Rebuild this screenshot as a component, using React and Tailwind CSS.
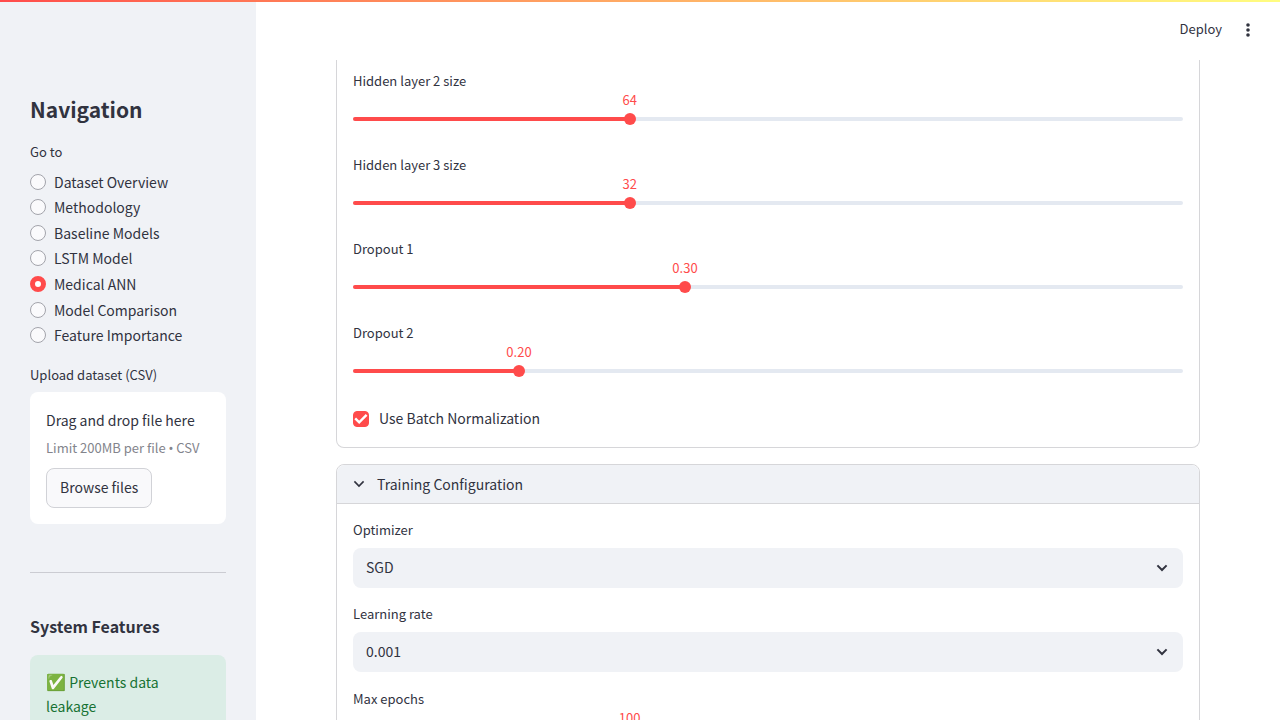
import { useState } from "react";

const PAGES = [
  "Dataset Overview",
  "Methodology",
  "Baseline Models",
  "LSTM Model",
  "Medical ANN",
  "Model Comparison",
  "Feature Importance",
];

function Slider({ id, label, min, max, step, initial, digits = 0 }) {
  const [value, setValue] = useState(initial);
  const percent = `${((value - min) / (max - min)) * 100}%`;
  return (
    <div className="pb-3">
      <label htmlFor={id} className="block h-7 text-[13px] leading-[22px]">
        {label}
      </label>
      <div className="relative pt-[15px]">
        <output
          htmlFor={id}
          className="absolute -top-[6px] -translate-x-1/2 text-[13px] leading-4 text-[#ff4b4b]"
          style={{ left: percent }}
        >
          {value.toFixed(digits)}
        </output>
        <div className="grid items-center">
          <div className="col-start-1 row-start-1 h-1 overflow-hidden rounded-full bg-[#e4e9f1]">
            <div className="h-full bg-[#ff4b4b]" style={{ width: percent }} />
          </div>
          <input
            id={id}
            type="range"
            min={min}
            max={max}
            step={step}
            value={value}
            onChange={(e) => setValue(Number(e.target.value))}
            className="col-start-1 row-start-1 -mx-1.5 h-3 cursor-pointer appearance-none bg-transparent [&::-webkit-slider-thumb]:size-3 [&::-webkit-slider-thumb]:appearance-none [&::-webkit-slider-thumb]:rounded-full [&::-webkit-slider-thumb]:bg-[#ff4b4b]"
          />
        </div>
      </div>
    </div>
  );
}

function Chevron({ className }) {
  return (
    <svg viewBox="0 0 12 8" className={className} fill="none" stroke="currentColor" aria-hidden="true">
      <path d="M1.4 1.4 6 6l4.6-4.6" />
    </svg>
  );
}

function Select({ id, label, options, initial }) {
  const [value, setValue] = useState(initial);
  return (
    <div>
      <label htmlFor={id} className="block h-7 text-[13px] leading-5">
        {label}
      </label>
      <div className="grid items-center">
        <select
          id={id}
          value={value}
          onChange={(e) => setValue(e.target.value)}
          className="col-start-1 row-start-1 h-10 w-full appearance-none rounded-lg bg-[#f0f2f6] px-[13px] pb-0.5 text-sm"
        >
          {options.map((o) => (
            <option key={o}>{o}</option>
          ))}
        </select>
        <Chevron className="pointer-events-none col-start-1 row-start-1 mr-[15px] h-2 w-3 justify-self-end stroke-2" />
      </div>
    </div>
  );
}

function Sidebar() {
  const [page, setPage] = useState("Medical ANN");
  return (
    <aside className="w-64 shrink-0 overflow-hidden bg-[#f0f2f6] px-[30px] pt-[95px]">
      <h2 className="text-[21px] leading-7 font-bold">Navigation</h2>
      <fieldset className="mt-[18px]">
        <legend className="h-7 text-[13px] leading-[22px]">Go to</legend>
        <div className="grid h-[179px] auto-rows-fr">
          {PAGES.map((name) => (
            <label key={name} className="flex items-center gap-2 text-sm leading-6">
              <input
                type="radio"
                name="page"
                checked={page === name}
                onChange={() => setPage(name)}
                className="size-4 appearance-none rounded-full border border-[#a3a4ab] bg-[#fafafc] checked:border-5 checked:border-[#ff4b4b] checked:bg-white"
              />
              {name}
            </label>
          ))}
        </div>
      </fieldset>

      <div className="mt-4">
        <h3 className="h-7 text-[13px] leading-[22px]">Upload dataset (CSV)</h3>
        <section className="rounded-lg bg-white p-4">
          <p className="text-sm leading-6">Drag and drop file here</p>
          <p className="mt-1 text-[13px] leading-6 text-[#83848c]">
            Limit 200MB per file <span className="font-['Noto_Sans',sans-serif]">•</span> CSV
          </p>
          <button
            type="button"
            className="mt-2 h-10 rounded-lg border border-[#d1d2d7] bg-[#f9f9fb] px-[13px] pb-0.5 text-sm leading-6"
          >
            Browse files
          </button>
        </section>
      </div>

      <hr className="mt-12 border-[#cbccd2]" />

      <h3 className="mt-[41px] text-base leading-6 font-bold">System Features</h3>
      <div className="mt-[17px] rounded-lg bg-[#dbede6] px-4 pt-3.5 pb-4 text-sm leading-6 text-[#177233]">
        <span className="text-base leading-6">✅</span> Prevents data leakage
      </div>
    </aside>
  );
}

export default function App() {
  const [batchNorm, setBatchNorm] = useState(true);
  const [open, setOpen] = useState(true);
  return (
    <div className="relative flex h-screen overflow-hidden bg-white font-['Noto_Sans_CJK_SC',sans-serif] text-[#31333f]">
      <div className="absolute inset-x-0 top-0 h-0.5 bg-linear-to-r from-[#ff4b4b] to-[#fffd80]" />
      <Sidebar />
      <div className="flex min-w-0 flex-1 flex-col">
        <header className="flex h-15 shrink-0 items-center justify-end gap-[18px] pr-6">
          <button type="button" className="pb-0.5 text-[13px] leading-6">
            Deploy
          </button>
          <button type="button" aria-label="Main menu">
            <svg viewBox="0 0 16 16" className="size-4" fill="currentColor" aria-hidden="true">
              <circle cx="8" cy="3" r="1.8" />
              <circle cx="8" cy="8" r="1.8" />
              <circle cx="8" cy="13" r="1.8" />
            </svg>
          </button>
        </header>

        <main className="flex min-h-0 flex-1 flex-col gap-4 overflow-hidden px-20">
          <section className="flex shrink-0 flex-col gap-4 rounded-b-lg border border-t-0 border-[#d6d6d9] px-4 pt-2.5 pb-[15px]">
            <div className="flex flex-col gap-[17px]">
              <Slider id="hidden2" label="Hidden layer 2 size" min={16} max={160} step={1} initial={64} />
              <Slider id="hidden3" label="Hidden layer 3 size" min={8} max={80} step={1} initial={32} />
              <Slider id="dropout1" label="Dropout 1" min={0.1} max={0.6} step={0.05} initial={0.3} digits={2} />
              <Slider id="dropout2" label="Dropout 2" min={0.1} max={0.6} step={0.05} initial={0.2} digits={2} />
            </div>
            <label className="mt-px flex h-[26px] items-center gap-2.5 text-sm">
              <span className="grid size-4">
                <input
                  type="checkbox"
                  checked={batchNorm}
                  onChange={(e) => setBatchNorm(e.target.checked)}
                  className="peer col-start-1 row-start-1 size-4 appearance-none rounded border border-[#a3a4ab] checked:border-[#ff4b4b] checked:bg-[#ff4b4b]"
                />
                <svg
                  viewBox="0 0 16 16"
                  className="pointer-events-none invisible col-start-1 row-start-1 size-4 peer-checked:visible"
                  fill="none"
                  stroke="white"
                  strokeWidth="2.4"
                  aria-hidden="true"
                >
                  <path d="m2.2 7.4 4 3.9 7.4-7.5" />
                </svg>
              </span>
              <span className="pb-0.5">Use Batch Normalization</span>
            </label>
          </section>

          <section className="shrink-0 rounded-lg border border-[#d6d6d9]">
            <button
              type="button"
              aria-expanded={open}
              onClick={() => setOpen(!open)}
              className="flex h-[39px] w-full items-center gap-3 rounded-t-lg border-b border-[#d6d6d9] bg-[#f0f2f6] px-4 pb-px text-sm leading-6"
            >
              <Chevron className="h-2 w-3 stroke-[1.6]" />
              Training Configuration
            </button>
            {open && (
              <div className="flex flex-col gap-4 p-4">
                <Select id="optimizer" label="Optimizer" options={["Adam", "SGD", "RMSprop"]} initial="SGD" />
                <Select id="rate" label="Learning rate" options={["0.01", "0.001", "0.0001"]} initial="0.001" />
                <Slider id="epochs" label="Max epochs" min={50} max={200} step={1} initial={100} />
              </div>
            )}
          </section>
        </main>
      </div>
    </div>
  );
}
